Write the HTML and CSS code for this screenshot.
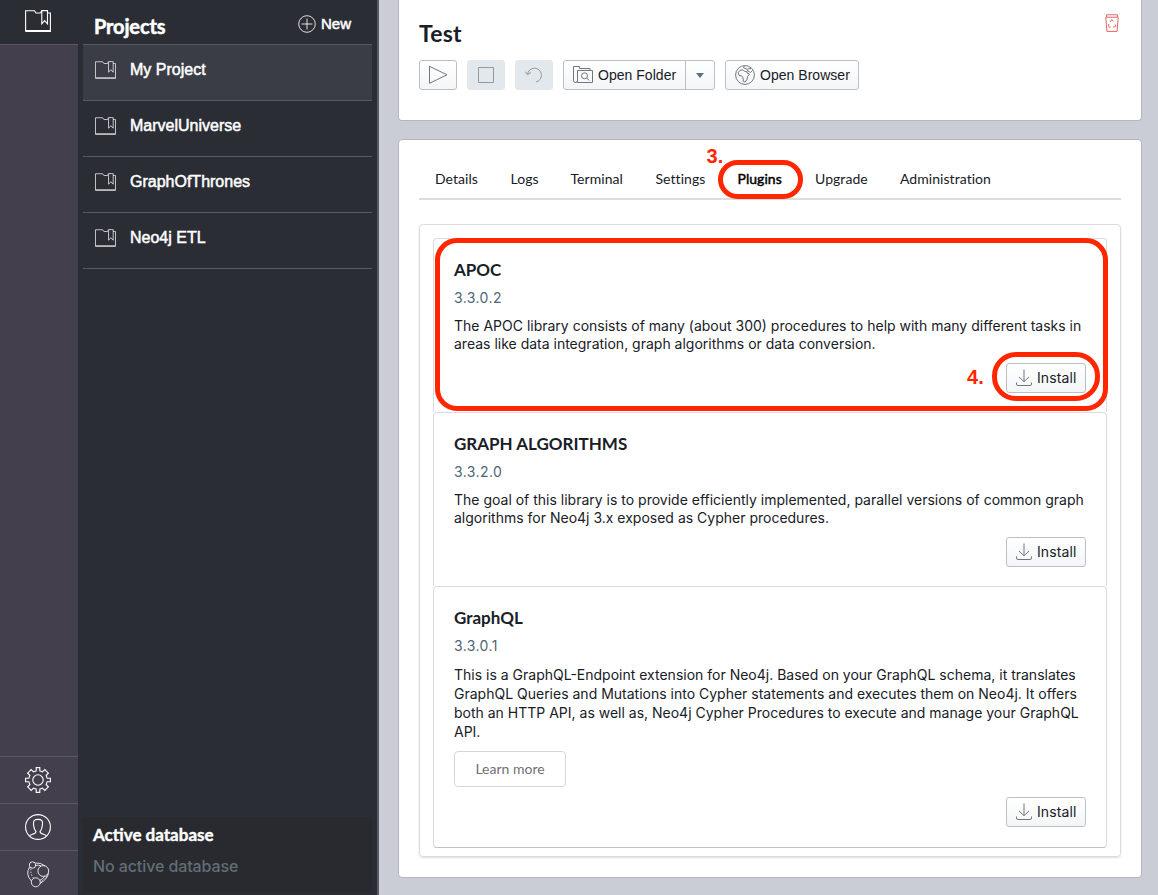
FILE: index.html
```html
<!DOCTYPE html>
<html lang="en">
<head>
<meta charset="utf-8">
<title>Projects</title>
<link rel="stylesheet" href="styles.css">
</head>
<body>
<svg class="defs" width="0" height="0" aria-hidden="true">
  <defs>
    <symbol id="folder" viewBox="0 0 26 22">
      <path d="M.6 21.4V.8H9.5L11 3H15.500M22.300 3H25.400v18.400H.6M.6 20.600h24.800" />
      <path d="M15.500 3L16.800.6h5.700v13.200L19.600 10.600l-2.800 3.200V.6" />
    </symbol>
    <symbol id="download" viewBox="0 0 16 18">
      <path d="M8 .5v12M3 8l5 4.700L13 8M.5 13.500v1.500q0 1.500 1.500 1.500h12q1.500 0 1.500-1.500v-1.500" />
    </symbol>
  </defs>
</svg>
<div class="app">
  <nav class="rail">
    <div class="rail-top"><svg class="line-icon" width="26" height="22"><use href="#folder"/></svg></div>
    <div class="rail-space"></div>
    <div class="rail-cell">
      <svg class="line-icon" width="26" height="26" viewBox="0 0 26 26"><path d="M11.200 .6h3.600v3.200l2.700 1.100 2.300-2.300 3.600 3.600-2.300 2.300 1.100 2.700h3.200v3.600h-3.200l-1.100 2.700 2.300 2.300-3.600 3.600-2.300-2.300-2.700 1.100v3.200h-3.600v-3.200l-2.700-1.100-2.300 2.300-3.600-3.600 2.300-2.300-1.100-2.700H.6v-3.600h3.200l1.100-2.700L2.600 6.200l3.600-3.600 2.300 2.300 2.700-1.100z"/><circle cx="13" cy="13" r="5.200"/></svg>
    </div>
    <div class="rail-cell">
      <svg class="line-icon" width="26" height="26" viewBox="0 0 26 26"><circle cx="13" cy="13" r="12.400"/><path d="M4.500 22C5.500 20 11 20.500 11 17.500 9.500 16 8.800 13.500 8.500 10 8.300 7 9 5.400 13 5.400S17.700 7 17.500 10C17.200 13.500 16.500 16 15 17.500 15 20.500 20.500 20 21.500 22"/></svg>
    </div>
    <div class="rail-cell">
      <svg class="line-icon thin" width="24" height="27" viewBox="0 0 24 27"><circle cx="6.500" cy="4" r="3.200"/><circle cx="17.300" cy="10" r="5.400"/><circle cx="9.800" cy="21.300" r="4.500"/><path d="M9.700 2Q15 1.500 19 5M9.500 4.500Q13 3.500 15 5M3.600 6Q-1 13 5.400 20M22.400 12.500Q21.500 18 14 22.500M18.500 15.400Q17 18 13.700 19.500"/><path class="dots" d="M5 7.500Q4 13 7.500 17M20.500 15Q18.500 19 14.300 21"/></svg>
    </div>
  </nav>

  <aside class="sidebar">
    <header class="side-head">
      <h2 class="side-title">Projects</h2>
      <div class="new"><svg class="line-icon thin" width="18" height="18" viewBox="0 0 18 18"><circle cx="9" cy="9" r="8.300"/><path d="M9 3.500v11M3.500 9h11"/></svg><span>New</span></div>
    </header>
    <ul class="projects">
      <li class="project selected"><svg class="line-icon" width="21" height="18"><use href="#folder"/></svg><span>My Project</span></li>
      <li class="project"><svg class="line-icon" width="21" height="18"><use href="#folder"/></svg><span>MarvelUniverse</span></li>
      <li class="project"><svg class="line-icon" width="21" height="18"><use href="#folder"/></svg><span>GraphOfThrones</span></li>
      <li class="project"><svg class="line-icon" width="21" height="18"><use href="#folder"/></svg><span>Neo4j ETL</span></li>
    </ul>
    <section class="active-db">
      <h3>Active database</h3>
      <p>No active database</p>
    </section>
  </aside>

  <main class="main">
    <section class="panel database">
      <div class="db-head">
        <h1>Test</h1>
        <svg class="trash" width="14" height="18" viewBox="0 0 14 18"><path d="M.6 3.200h12.800M1.600 3V.8h10.800V3M.8 3.500l1.100 13.900h10.200l1.100-13.900"/><path class="recycle" d="M5.200 8l1.600-2.600L8.700 8M3.800 9.800L3.500 13h2.300M8 12.800h3L10 9.800"/></svg>
      </div>
      <div class="toolbar">
        <div class="btn icon-only"><svg class="gray-icon" width="20" height="20" viewBox="0 0 20 20"><path d="M1.500 1.300v17L19 9.800z"/></svg></div>
        <div class="btn icon-only disabled"><svg class="gray-icon" width="18" height="18" viewBox="0 0 18 18"><path d="M1.500 1.500h15v15h-15z"/></svg></div>
        <div class="btn icon-only disabled"><svg class="gray-icon" width="18" height="18" viewBox="0 0 18 18"><path d="M2.500 8.500a7 7 0 1 1 8.500 7.500M0 5.500l2.500 3.200L6 6.500"/></svg></div>
        <div class="btn split">
          <div class="split-main"><svg class="gray-icon" width="20" height="18" viewBox="0 0 20 18"><path d="M4.500 16.500h15v-12h-15zv0M4.500 4.500v10q0 2-2 2t-2-2v-14H6.500v2H17v2"/><circle cx="11.500" cy="9.800" r="3"/><path d="M13.700 12l2.500 2.500"/></svg><span class="ui-text">Open Folder</span></div>
          <div class="split-arrow"><i class="caret"></i></div>
        </div>
        <div class="btn browser"><svg class="gray-icon" width="20" height="20" viewBox="0 0 20 20"><circle cx="10" cy="10" r="9.400"/><path d="M3.300 7.500L5 5.300 8 4.800 9.500 6.300 12.300 6.800 12 8 14.500 9.200 12.500 11.500 12 14.500 10 17 8.300 16.500 8 12.800 6.800 11 4 10.500zM9.200 1.200L8.500 2.800 11.500 3.800 13 6 15.500 7.500 17.500 5.500M12.500 4L16 3.500"/></svg><span class="ui-text">Open Browser</span></div>
      </div>
    </section>

    <section class="panel detail">
      <div class="tabs">
        <span class="tab tab-details">Details</span>
        <span class="tab tab-logs">Logs</span>
        <span class="tab tab-terminal">Terminal</span>
        <span class="tab tab-settings">Settings</span>
        <span class="tab tab-plugins">Plugins<i class="ring ring-tab"></i><b class="step step-three">3.</b></span>
        <span class="tab tab-upgrade">Upgrade</span>
        <span class="tab tab-admin">Administration</span>
      </div>
      <div class="plugins">
        <article class="card">
          <h4>APOC</h4>
          <div class="version">3.3.0.2</div>
          <p class="desc"><span>The APOC library consists of many (about 300) procedures to help with many different tasks in</span><span>areas like data integration, graph algorithms or data conversion.</span></p>
          <div class="btn install"><svg class="gray-icon" width="16" height="18"><use href="#download"/></svg><span>Install</span><i class="ring ring-install"></i><b class="step step-four">4.</b></div>
          <i class="ring ring-card"></i>
        </article>
        <article class="card">
          <h4>GRAPH ALGORITHMS</h4>
          <div class="version">3.3.2.0</div>
          <p class="desc"><span>The goal of this library is to provide efficiently implemented, parallel versions of common graph</span><span>algorithms for Neo4j 3.x exposed as Cypher procedures.</span></p>
          <div class="btn install"><svg class="gray-icon" width="16" height="18"><use href="#download"/></svg><span>Install</span></div>
        </article>
        <article class="card last">
          <h4>GraphQL</h4>
          <div class="version">3.3.0.1</div>
          <p class="desc loose"><span>This is a GraphQL-Endpoint extension for Neo4j. Based on your GraphQL schema, it translates</span><span>GraphQL Queries and Mutations into Cypher statements and executes them on Neo4j. It offers</span><span>both an HTTP API, as well as, Neo4j Cypher Procedures to execute and manage your GraphQL</span><span>API.</span></p>
          <div class="learn">Learn more</div>
          <div class="btn install"><svg class="gray-icon" width="16" height="18"><use href="#download"/></svg><span>Install</span></div>
        </article>
      </div>
    </section>
  </main>
</div>
</body>
</html>
```

FILE: styles.css
```css
* { box-sizing: border-box; }
body { margin: 0; height: 895px; overflow: hidden; font-family: "Liberation Sans", sans-serif; color: #182026; }
h1, h2, h3, h4, p, ul { margin: 0; padding: 0; }
ul { list-style: none; }
span { white-space: nowrap; }
.defs { display: block; }
.app { display: flex; width: 1158px; height: 895px; background: #cbcdd6; }

.line-icon { display: block; flex: none; fill: none; stroke: #fff; stroke-width: 1.1; }
.gray-icon { display: block; flex: none; fill: none; stroke: #737679; stroke-width: 1; }
.line-icon.thin { stroke-width: .85; }
.dots { stroke-dasharray: 1.500 1.500; }

.rail { display: flex; flex-direction: column; width: 78px; background: #433f4c; }
.rail-top { height: 45px; padding: 10px 0 0 25px; background: #2b2d35; border-bottom: 1px solid #555966; }
.rail-space { flex: 1; }
.rail-cell { display: flex; align-items: center; justify-content: center; height: 47px; padding-right: 2px; border-top: 1px solid #555966; }
.rail-cell:last-child { height: 45px; padding-top: 2px; }

.sidebar { display: flex; flex-direction: column; width: 301px; padding: 0 5px 3px; background: #2b2d35; border-right: 2px solid #565a67; color: #fff; }
.side-head { display: flex; justify-content: space-between; height: 44px; padding: 11px 21px 0 11px; }
.side-title { font: bold 20px/30px Lato, sans-serif; letter-spacing: -.15px; -webkit-text-stroke: .5px; }
.new { display: flex; gap: 5px; height: 25px; align-items: center; font-size: 15px; -webkit-text-stroke: .5px; }
.new span { margin-top: -1px; }
.projects { border-top: 1px solid #555966; }
.project { display: flex; gap: 14px; height: 56px; padding: 16px 0 0 12px; border-bottom: 1px solid #555966; font-size: 16px; line-height: 18px; -webkit-text-stroke: .5px; }
.selected { background: #3a3d46; }
.project .line-icon { stroke: #d5d6d8; }
.active-db { height: 75px; margin-top: auto; padding: 8px 10px; background: #282a2f; }
.active-db h3 { font: bold 17px/20px Lato, sans-serif; -webkit-text-stroke: .4px; }
.active-db p { margin-top: 11px; font: 500 16px/20px Inter, sans-serif; letter-spacing: -.1px; color: #646d76; }

.main { flex: 1; padding-left: 19px; }
.panel { width: 744px; background: #fff; border: 1px solid #b3b6be; }
.database { height: 121px; padding: 18px 20px; border-top: 0; border-radius: 0 0 4px 4px; }
.db-head { display: flex; justify-content: space-between; padding: 0 2px 0 0; height: 42px; }
.db-head h1 { font: bold 23px/30px Lato, sans-serif; letter-spacing: .2px; }
.trash { margin-top: -4px; fill: none; stroke: #dc6863; stroke-width: 1; }
.recycle { stroke-dasharray: 2.400 .7; }
.toolbar { display: flex; gap: 10px; }
.btn { position: relative; display: flex; align-items: center; height: 30px; border: 1px solid #bcc0c5; border-radius: 3px; background: linear-gradient(#fff, #f3f5f7); color: #182026; }
.icon-only { width: 38px; justify-content: center; }
.disabled { border-color: #e3e8ec; background: #e3e8ec; }
.disabled .gray-icon { stroke: #96999c; }
.ui-text { font-size: 14px; letter-spacing: .03px; }
.split { width: 152px; }
.split-main { display: flex; align-items: center; gap: 5px; width: 122px; height: 28px; padding-left: 9px; border-right: 1px solid #bcc0c5; }
.split-arrow { display: flex; flex: 1; justify-content: center; }
.caret { border: 5px solid transparent; border-width: 5px 4px 0; border-top-color: #5c7080; }
.browser { width: 134px; gap: 5px; padding-left: 9px; }

.detail { height: 739px; margin-top: 18px; padding: 20px; border-radius: 4px; }
.tabs { display: flex; height: 40px; padding-left: 16px; border-bottom: 2px solid #dcdddf; font: 14px/37px Lato, sans-serif; letter-spacing: .05px; }
.tab { position: relative; flex: none; }
.tab-details { width: 75.500px; }
.tab-logs { width: 60px; }
.tab-terminal { width: 85px; }
.tab-settings { width: 82px; }
.tab-plugins { width: 77.500px; color: #000; -webkit-text-stroke: .45px; }
.tab-upgrade { width: 85px; }
.plugins { height: 633px; margin-top: 24px; padding: 13px; border: 1px solid #dadcdf; border-radius: 4px; box-shadow: 0 1px 2px #0002; }

.card { position: relative; display: flex; flex-direction: column; height: 174px; padding: 21px 20px 0; border: 1px solid #d9dbde; border-bottom: 0; border-radius: 4px 4px 0 0; }
.last { height: 262px; border-bottom: 1px solid #bfc1c5; border-radius: 4px; }
.card h4 { font: bold 17px/20px Lato, sans-serif; }
.version { margin-top: 8px; font: 14px/20px Inter, sans-serif; letter-spacing: .4px; color: #4f6475; }
.desc { margin-top: 9px; font: 14px/18px Inter, sans-serif; }
.desc span { display: block; width: max-content; }
.loose { line-height: 19px; }
.install { align-self: flex-end; width: 80px; flex: none; margin-top: 10px; gap: 5px; padding-left: 9px; font: 14px Inter, sans-serif; letter-spacing: .1px; }
.install span { margin-top: -1px; }
.learn { display: flex; align-items: center; justify-content: center; flex: none; width: 112px; height: 36px; margin-top: 10px; padding-bottom: 2px; border: 1px solid #d6d6d6; border-radius: 4px; font: 14px Lato, sans-serif; color: #717171; }

.ring { position: absolute; z-index: 2; border: 5px solid #ff2600; }
.ring-tab { left: -20px; top: 0; width: 85px; height: 39px; border-radius: 20px; }
.ring-card { left: 1px; top: -1px; width: 673px; height: 173px; border-radius: 22px; }
.ring-install { left: -15px; top: -12px; width: 108px; height: 49px; border-radius: 24px; }
.step { position: absolute; z-index: 2; font: bold 20px/20px "Liberation Sans", sans-serif; color: #ff2600; -webkit-text-stroke: 0; }
.step-three { left: -31px; top: -14px; }
.step-four { left: -40px; top: 3px; }
```
